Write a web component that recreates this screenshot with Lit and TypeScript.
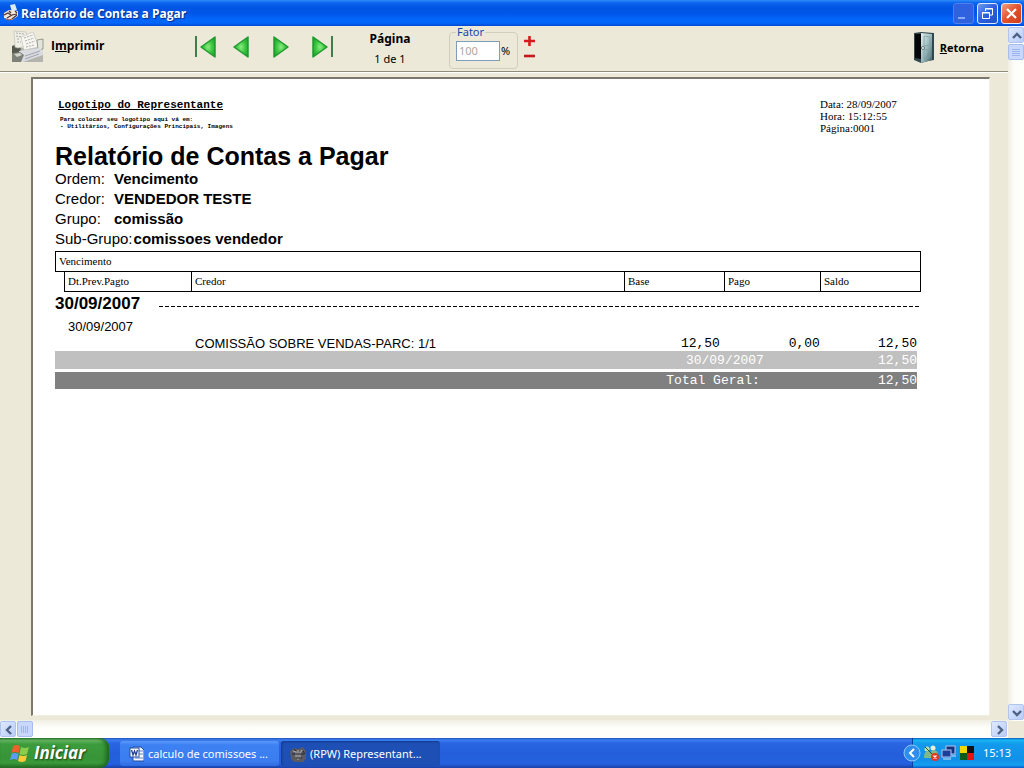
import { LitElement, html, css, svg } from "lit";
import { customElement } from "lit/decorators.js";

const arrow = (points: string, bar?: number) => html`
  <svg width="24" height="26" viewBox="0 0 24 26" aria-hidden="true">
    <defs>
      <radialGradient id="g" cx="0.5" cy="0.5" r="0.6">
        <stop offset="0" stop-color="#8bec80" />
        <stop offset="0.5" stop-color="#3fc844" />
        <stop offset="1" stop-color="#1fa02c" />
      </radialGradient>
    </defs>
    ${bar === undefined ? "" : svg`<rect x=${bar} y="2" width="2" height="21" fill="#3f7d4c" />`}
    <polygon points=${points} fill="url(#g)" stroke="#1f9a2e" stroke-width="1.5" stroke-linejoin="round" />
  </svg>`;

const chevron = (d: string) => html`
  <svg width="16" height="16" viewBox="0 0 16 16" aria-hidden="true">
    <path d=${d} fill="none" stroke="#4d6185" stroke-width="2.4" />
  </svg>`;

@customElement("xp-titlebar")
class XpTitlebar extends LitElement {
  static styles = css`
    .bar {
      display: flex;
      align-items: center;
      height: 26px;
      padding: 0 2px 0 3px;
      gap: 2px;
      color: #fff;
      background: linear-gradient(#2f8cf8 0, #0a63ee 3px, #0054e0 8px, #0058ea 14px, #0467fc 20px, #0366fb 23px, #0048d0 26px);
    }
    h1 {
      flex: 1;
      margin: 0;
      padding-top: 1px;
      font: bold 12px/18px "Open Sans", sans-serif;
      text-shadow: 1px 1px 1px #0a2a80;
      white-space: nowrap;
    }
    button {
      width: 21px;
      height: 21px;
      padding: 0;
      border: 1px solid #dfe9ff;
      border-radius: 3px;
      background: linear-gradient(135deg, #6f9cf5, #2a5fdd 50%, #2352c8);
    }
    .min {
      border-color: #4f80ee;
      background: #2f62e0;
    }
    .close {
      background: linear-gradient(135deg, #f0a084, #e2512a 50%, #c8401a);
    }
    svg { display: block; }
    .group { display: flex; gap: 3px; }
  `;
  render() {
    return html`
      <header class="bar">
        <svg width="16" height="20" viewBox="0 0 16 20" aria-hidden="true">
          <path d="M7 2l5-1 2 6-5 2z" fill="#dceaf8" />
          <path d="M1 10l5-3 9 1v5l-6 4-8-2z" fill="#f3e4da" />
          <path d="M1 12l4-2 3 2M4 15l5-3 5-1M9 16l5-4M6 8l2 2M12 8l2 2" stroke="#4a3332" stroke-width="1.200" fill="none" />
          <path d="M2 16l4 1 3-1" stroke="#c65c3f" fill="none" />
        </svg>
        <h1>Relatório de Contas a Pagar</h1>
        <div class="group">
          <button class="min" aria-label="Minimizar">
            <svg width="19" height="19"><rect x="4" y="13" width="7" height="2" fill="#88aaf6" /></svg>
          </button>
          <button aria-label="Restaurar">
            <svg width="19" height="19" fill="none" stroke="#fff">
              <path d="M7.500 7V4.500h7v6.500h-2.500M7 5h8" /><path d="M4.500 8.500h7v6h-7zM4 9h8" />
            </svg>
          </button>
          <button class="close" aria-label="Fechar">
            <svg width="19" height="19"><path d="M5 5l9 9M14 5l-9 9" stroke="#fff" stroke-width="2.200" /></svg>
          </button>
        </div>
      </header>`;
  }
}

@customElement("report-toolbar")
class ReportToolbar extends LitElement {
  static styles = css`
    .bar {
      display: flex;
      align-items: flex-start;
      height: 45px;
      padding: 0 24px 0 11px;
      border-bottom: 1px solid #8f8c7c;
      box-shadow: 0 1px #fff;
      font: 11px/14px "Noto Sans", sans-serif;
      color: #000;
    }
    button {
      display: flex;
      align-items: center;
      padding: 0;
      border: 0;
      background: none;
      color: #000;
      font: bold 12px/16px "Open Sans", sans-serif;
    }
    svg { display: block; }
    .print { gap: 7px; width: 183px; margin-top: 3px; }
    .back { gap: 4px; margin: 5px 0 0 auto; font-size: 11px; }
    nav { display: flex; gap: 15px; margin-top: 8px; }
    .page { width: 60px; margin: 6px 29px 0 25px; text-align: center; }
    .page strong { display: block; margin-bottom: 6px; font-size: 12px; }
    fieldset {
      display: flex;
      align-items: center;
      box-sizing: border-box;
      min-width: 0;
      width: 69px;
      height: 43px;
      margin: 0;
      padding: 0 0 5px 6px;
      border: 1px solid #d0cfbc;
      border-radius: 4px;
    }
    legend { padding: 0 1px; color: #1645b0; line-height: 12px; }
    input {
      box-sizing: border-box;
      width: 44px;
      height: 20px;
      padding: 0 2px;
      border: 1px solid #7f9db9;
      background: #fff;
      color: #aca899;
      font: 11px/16px "Noto Sans", sans-serif;
    }
    label { margin-left: 1px; }
    .zoom { display: grid; gap: 1px; margin: 8px 0 0 5px; }
  `;
  render() {
    return html`
      <div class="bar">
        <button class="print">
          <svg width="33" height="34" viewBox="0 0 33 34" aria-hidden="true">
            <path d="M1 18l6-3 4 4 16 0 5 4v10H1z" fill="#b4b4ae" />
            <path d="M1 17l5-2 4 5-2 4-7 1z" fill="#55584f" />
            <path d="M3 2l12 1 4 13-12 3-3-1z" fill="#f0efe8" stroke="#c2c1b6" stroke-width="0.700" />
            <path d="M10 8l12-5 6 15-15 3z" fill="#f7f6f1" stroke="#c4c3b9" stroke-width="0.700" />
            <path d="M5 4l8 1M5 7l6 1M6 10l3 0M6 13l4 0M13 9l9-3M14 12l9-3M15 15l9-3M15 18l8-2" stroke="#a2a69b" stroke-width="0.900" stroke-dasharray="2 1" />
            <path d="M26 11l6-1v10l-5 1z" fill="#e2e5dc" stroke="#8d9285" stroke-width="0.900" />
            <path d="M8 22l20-3 4 3v4l-20 7H9z" fill="#dadbe0" />
            <path d="M1 24l8-1 4 3-3 7H1z" fill="#7d8078" />
            <path d="M3 25l6-1 2 2-5 2z" fill="#d3d4cc" />
            <path d="M14 27l15-5M14 30l14-5" stroke="#9a9da4" stroke-width="0.900" />
          </svg>
          <span>I<u>m</u>primir</span>
        </button>
        <nav aria-label="Páginas">
          <button aria-label="Primeira página">${arrow("21,3 21,23 7,13", 1)}</button>
          <button aria-label="Página anterior">${arrow("15,3 15,23 1,13")}</button>
          <button aria-label="Próxima página">${arrow("2,3 2,23 16,13")}</button>
          <button aria-label="Última página">${arrow("2,3 2,23 16,13", 20)}</button>
        </nav>
        <div class="page"><strong>Página</strong>1 de 1</div>
        <fieldset>
          <legend>Fator</legend>
          <input id="factor" value="100" disabled />
          <label for="factor">%</label>
        </fieldset>
        <div class="zoom">
          <button aria-label="Aumentar"><svg width="13" height="14"><path d="M1 7h11M6.500 2v10" stroke="#d41a1a" stroke-width="2.600" /></svg></button>
          <button aria-label="Diminuir"><svg width="13" height="14"><path d="M1 7h11" stroke="#c81818" stroke-width="2.600" /></svg></button>
        </div>
        <button class="back">
          <svg width="23" height="33" viewBox="0 0 23 33" aria-hidden="true">
            <defs>
              <linearGradient id="d" x1="0" y1="0" x2="1" y2="1">
                <stop offset="0" stop-color="#e6f0ee" />
                <stop offset="0.5" stop-color="#9dbcbf" />
                <stop offset="1" stop-color="#3e6065" />
              </linearGradient>
            </defs>
            <path d="M1 2l7-1 13 1v27l-6 1-7 2-7-3z" fill="#33484c" />
            <path d="M2 3h6v25l-6-1z" fill="#040607" />
            <path d="M8 2l11 1v26L8 32z" fill="url(#d)" />
            <path d="M11 5l6 1v8l-6 1zM11 19l6-1v8l-6 2z" fill="none" stroke="#7d9fa4" stroke-width="0.800" />
            <circle cx="10" cy="17" r="1.500" fill="#fff" stroke="#42585a" stroke-width="0.800" />
          </svg>
          <span><u>R</u>etorna</span>
        </button>
      </div>`;
  }
}

@customElement("report-paper")
class ReportPaper extends LitElement {
  static styles = css`
    :host {
      display: block;
      box-sizing: border-box;
      flex: 1;
      padding: 19px 68px 20px 22px;
      border: solid;
      border-width: 2px 1px 1px 2px;
      border-color: #7d786b #f1efe2 #f1efe2 #7d786b;
      background: #fff;
      color: #000;
      font: 15px/20px "Liberation Sans", sans-serif;
    }
    header { display: flex; justify-content: space-between; }
    .logo { padding: 1px 0 0 3px; font: bold 11px/12px "Liberation Mono", monospace; }
    .logo p { margin: 5px 0 0 2px; font-size: 6px; line-height: 7px; }
    .meta { width: 101px; font: 11px/12px "Liberation Serif", serif; }
    h2 { margin: 9px 0 0; font-size: 25px; line-height: 26px; }
    dl { display: grid; grid-template-columns: 59px 1fr; margin: 0 0 2px; white-space: nowrap; }
    dt { padding-right: 1px; }
    dd { margin: 0; font-weight: bold; }
    .wide { grid-column: 1 / -1; display: flex; }
    table { width: 100%; table-layout: fixed; border-spacing: 0; border-collapse: separate; }
    th, td { box-sizing: border-box; padding: 0; text-align: left; white-space: nowrap; }
    .stub { width: 9px; }
    .due { width: 127px; }
    .base { width: 100px; }
    .paid { width: 96px; }
    .rest { width: 101px; }
    thead th {
      height: 20px;
      padding-left: 3px;
      border: solid #000;
      border-width: 0 0 1px 1px;
      font: 11px/19px "Liberation Serif", serif;
    }
    thead .full { height: 21px; border-width: 1px; }
    thead .none { border: 0; }
    thead th:last-child { border-right: 1px solid #000; }
    .day th { height: 24px; font-size: 17px; line-height: 24px; }
    .day div { display: flex; align-items: center; gap: 19px; }
    .day i {
      flex: 1;
      height: 1px;
      margin-top: 5px;
      background: repeating-linear-gradient(90deg, #000 0 4px, transparent 4px 6px);
    }
    .date td { height: 21px; padding-left: 4px; font-size: 13px; line-height: 21px; }
    .item td { height: 14px; padding-left: 4px; font-size: 13px; line-height: 14px; }
    .item .num {
      padding-right: 4px;
      text-align: right;
      font: 13px/14px "Liberation Mono", monospace;
    }
    .item .paid { padding-right: 0; }
    .sum td {
      height: 18px;
      padding: 0;
      color: #fff;
      background: #c0c0c0;
      text-align: right;
      font: 13px/17px "Liberation Mono", monospace;
    }
    .sum td:first-child { padding-right: 56px; }
    .sum td:last-child { border-right: 4px solid transparent; background-clip: padding-box; }
    .gap td { height: 3px; }
    .total td { height: 17px; background-color: #808080; line-height: 15px; }
    .total td:first-child { padding-right: 60px; }
  `;
  render() {
    return html`
      <header>
        <div class="logo">
          <u>Logotipo do Representante</u>
          <p>Para colocar seu logotipo aqui vá em:<br />- Utilitários, Configurações Principais, Imagens</p>
        </div>
        <div class="meta">Data: 28/09/2007<br />Hora: 15:12:55<br />Página:0001</div>
      </header>
      <h2>Relatório de Contas a Pagar</h2>
      <dl>
        <dt>Ordem:</dt><dd>Vencimento</dd>
        <dt>Credor:</dt><dd>VENDEDOR TESTE</dd>
        <dt>Grupo:</dt><dd>comissão</dd>
        <div class="wide"><dt>Sub-Grupo:</dt><dd>comissoes vendedor</dd></div>
      </dl>
      <table>
        <colgroup>
          <col class="stub" /><col class="due" /><col /><col class="base" /><col class="paid" /><col class="rest" />
        </colgroup>
        <thead>
          <tr><th class="full" colspan="6">Vencimento</th></tr>
          <tr>
            <th class="none"></th><th>Dt.Prev.Pagto</th><th>Credor</th><th>Base</th><th>Pago</th><th>Saldo</th>
          </tr>
        </thead>
        <tbody>
          <tr class="day"><th colspan="6"><div>30/09/2007<i></i></div></th></tr>
          <tr class="date"><td></td><td colspan="5">30/09/2007</td></tr>
          <tr class="item">
            <td colspan="2"></td><td>COMISSÃO SOBRE VENDAS-PARC: 1/1</td>
            <td class="num">12,50</td><td class="num paid">0,00</td><td class="num">12,50</td>
          </tr>
          <tr class="sum"><td colspan="5">30/09/2007</td><td>12,50</td></tr>
          <tr class="gap"><td colspan="6"></td></tr>
          <tr class="sum total"><td colspan="5">Total Geral:</td><td>12,50</td></tr>
        </tbody>
      </table>`;
  }
}

@customElement("xp-scrollbar")
class XpScrollbar extends LitElement {
  static properties = { vertical: { type: Boolean, reflect: true } };
  declare vertical: boolean;
  static styles = css`
    :host {
      display: flex;
      gap: 1px;
      padding: 1px 1px 0 0;
      background: linear-gradient(#f0efe4, #fdfdfa 40%, #fefefb);
    }
    :host([vertical]) {
      flex-direction: column;
      padding: 1px 0;
      background: linear-gradient(90deg, #f0efe4, #fdfdfa 40%, #fefefb);
    }
    button {
      display: grid;
      place-items: center;
      box-sizing: border-box;
      width: 16px;
      height: 16px;
      padding: 0;
      border: 1px solid #b0c4f4;
      border-radius: 2px;
      background: linear-gradient(135deg, #dfe9fe, #b9ccf8);
    }
    .track { flex: 1; }
    .thumb {
      box-sizing: border-box;
      width: 16px;
      height: 16px;
      border: 1px solid #a6bdf0;
      border-radius: 2px;
      background: repeating-linear-gradient(90deg, #9db6ee 0 1px, transparent 1px 2px) center / 8px 7px no-repeat, #c8d7fb;
    }
    :host([vertical]) .thumb {
      background: repeating-linear-gradient(#9db6ee 0 1px, transparent 1px 2px) center / 8px 7px no-repeat, #c8d7fb;
    }
  `;
  render() {
    return html`
      <button aria-label="Voltar">${chevron(this.vertical ? "M4 10l4-4 4 4" : "M10 4l-4 4 4 4")}</button>
      <div class="track"><div class="thumb"></div></div>
      <button aria-label="Avançar">${chevron(this.vertical ? "M4 6l4 4 4-4" : "M6 4l4 4-4 4")}</button>`;
  }
}

@customElement("xp-taskbar")
class XpTaskbar extends LitElement {
  static styles = css`
    .bar {
      display: flex;
      align-items: stretch;
      height: 30px;
      color: #fff;
      background: linear-gradient(#2150b8 0, #3b80f0 2px, #2a66e2 5px, #245edb 15px, #2460de 26px, #1941a5 30px);
      font: 11px/14px "Noto Sans", sans-serif;
    }
    button {
      display: flex;
      align-items: center;
      box-sizing: border-box;
      margin: 0;
      padding: 0;
      border: 0;
      color: #fff;
      font: inherit;
    }
    .start {
      width: 109px;
      margin-right: 11px;
      padding-left: 10px;
      gap: 4px;
      border-radius: 0 9px 9px 0;
      background: linear-gradient(#2f7a30 0, #6cbb6a 2px, #3c9c3c 6px, #379437 20px, #3a9a3a 25px, #266d26 30px);
      box-shadow: inset -3px 0 4px #1d661f;
      font: italic bold 17px/24px "Open Sans", sans-serif;
      text-shadow: 1px 1px 2px #163c16;
    }
    .task {
      width: 159px;
      height: 25px;
      margin: 3px 2px 0 0;
      padding-left: 9px;
      gap: 4px;
      border-radius: 3px;
      background: linear-gradient(#5b98fa 0, #3c81f3 4px, #3b7df0 20px, #2f6be0);
      white-space: nowrap;
    }
    .active { background: #1e4fb4; box-shadow: inset 1px 1px 2px #133a8c; }
    .tray {
      display: flex;
      align-items: center;
      margin-left: auto;
      padding-right: 13px;
      background: linear-gradient(#0c59b9 0, #18b6f2 2px, #129aec 6px, #1190e8 22px, #13a0f0 27px, #095bc9 30px);
      border-left: 1px solid #0a3f9c;
    }
    .tray button { margin-left: -10px; background: none; }
    .icons { margin: 0 7px 0 2px; }
  `;
  render() {
    return html`
      <footer class="bar">
        <button class="start">
          <svg width="20" height="20" viewBox="0 0 20 20" aria-hidden="true">
            <path d="M3 3q3-2 7 0l-1.500 7q-3-2-7 0z" fill="#f0602c" />
            <path d="M11 4q4 2 8 0l-2 7q-4 2-7.500 0z" fill="#8ccc4a" />
            <path d="M1.500 11q3-2 7 0l-1.500 6q-3-2-7 0z" fill="#5c9cf4" />
            <path d="M9.500 12q4 2 7.500 0l-1.500 6q-4 2-7.500 0z" fill="#fcc83c" />
          </svg>
          Iniciar
        </button>
        <button class="task">
          <svg width="15" height="16" viewBox="0 0 15 16" aria-hidden="true">
            <path d="M4 1h8l3 3v11H4z" fill="#f4f7ff" stroke="#234c9c" />
            <path d="M10 5h4M10 8h4M6 12h8" stroke="#6a86bf" />
            <rect x="1" y="2" width="9" height="9" fill="#fff" stroke="#234c9c" />
            <path d="M2.500 4l1.500 5 1.500-4 1.500 4 1.500-5" fill="none" stroke="#1c3f90" stroke-width="1.300" />
          </svg>
          calculo de comissoes ...
        </button>
        <button class="task active">
          <svg width="16" height="16" viewBox="0 0 16 16" aria-hidden="true">
            <path d="M0 5l4-3 4 1 5-2 3 4v8l-3 3H4l-3-3z" fill="#5b5a62" />
            <path d="M3 5l3 1v7M8 4v10M12 4l-2 3v6" stroke="#a3a2a2" stroke-width="1.300" fill="none" />
            <path d="M2 8h12M5 12h7M4 3l2 2M13 5l2 3" stroke="#272631" />
          </svg>
          (RPW) Representant...
        </button>
        <div class="tray">
          <button aria-label="Mostrar ícones ocultos">
            <svg width="18" height="20" viewBox="0 0 18 20" aria-hidden="true">
              <circle cx="9" cy="10" r="8" fill="#2f8df0" stroke="#8cc8fb" />
              <path d="M11 6l-4 4 4 4" fill="none" stroke="#fff" stroke-width="2" />
            </svg>
          </button>
          <svg class="icons" width="53" height="18" viewBox="0 0 53 18" aria-hidden="true">
            <circle cx="4" cy="5" r="2.500" fill="#bfe4a8" /><circle cx="10" cy="4" r="2.500" fill="#e4efe0" />
            <path d="M1 14q0-7 4-7t4 7zM7 12q0-6 4-6t4 6z" fill="#7fb98a" /><path d="M2 3l9 9" stroke="#234c40" />
            <circle cx="12" cy="13" r="4" fill="#e03a1c" />
            <path d="M10.500 11.500l3 3M13.500 11.500l-3 3" stroke="#fff" stroke-width="1.200" />
            <rect x="23" y="2" width="9" height="8" fill="#16317e" stroke="#b7c6ea" />
            <rect x="19" y="6" width="9" height="7" fill="#1d3f9b" stroke="#b7c6ea" />
            <path d="M20 15h8M29 12h4" stroke="#d8dff0" />
            <path d="M37 2h7v7h-7z" fill="#f2d800" /><path d="M44 2h7v7h-7z" fill="#111" />
            <path d="M37 9h7v7h-7z" fill="#0a5c1c" /><path d="M44 9h7v7h-7z" fill="#e01414" />
          </svg>
          <time>15:13</time>
        </div>
      </footer>`;
  }
}

@customElement("app-root")
class AppRoot extends LitElement {
  static styles = css`
    :host { display: flex; flex-direction: column; height: 100vh; overflow: hidden; background: #ece9d8; }
    .body { display: flex; flex: 1; min-height: 0; }
    .main { display: flex; flex: 1; flex-direction: column; min-width: 0; }
    .sheet { display: flex; flex: 1; padding: 5px 18px 4px 31px; }
    .side { display: flex; flex-direction: column; width: 16px; }
    .side xp-scrollbar { flex: 1; }
    .corner { height: 17px; }
    .main xp-scrollbar { height: 17px; }
  `;
  render() {
    return html`
      <xp-titlebar></xp-titlebar>
      <div class="body">
        <div class="main">
          <report-toolbar></report-toolbar>
          <main class="sheet"><report-paper></report-paper></main>
          <xp-scrollbar></xp-scrollbar>
        </div>
        <div class="side"><xp-scrollbar vertical></xp-scrollbar><div class="corner"></div></div>
      </div>
      <xp-taskbar></xp-taskbar>`;
  }
}
